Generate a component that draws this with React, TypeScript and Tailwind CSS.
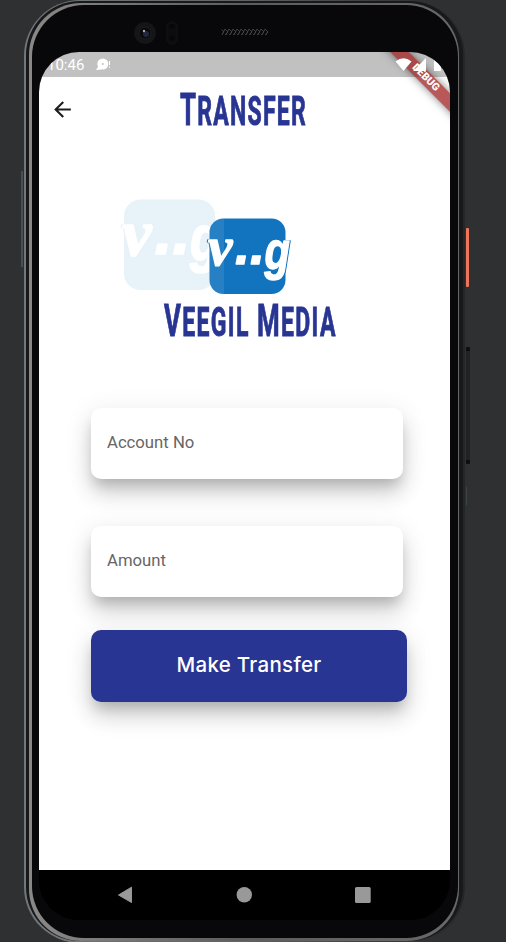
import React from "react";
import { MdArrowBack } from "react-icons/md";

const brandFont = "font-['Roboto',sans-serif]";

function Mark({ color, outline }: { color: string; outline: string }) {
  return (
    <>
      <rect width="76" height="75.5" rx="14" fill={color} />
      <g
        className={outline}
        fill="#fff"
        stroke="#fff"
        strokeWidth="1.4"
        strokeLinejoin="round"
        fontWeight="700"
        fontStyle="italic"
      >
        <text x="-1.500" y="46.500" fontSize="55" fontFamily="Liberation Serif, serif">v</text>
        <g fontFamily="Liberation Sans, sans-serif">
          <text x="25.500" y="45" fontSize="54">.</text>
          <text x="40.500" y="45" fontSize="54">.</text>
          <text transform="translate(55 50) scale(0.77 1)" fontSize="54">g</text>
        </g>
      </g>
    </>
  );
}

function Logo() {
  return (
    <svg width="180" height="104" viewBox="0 0 180 104" className="block overflow-visible">
      <g transform="translate(9 7.5) scale(1.2)">
        <Mark color="#e7f2f9" outline="[filter:drop-shadow(1px_0_0_#e7f2f9)_drop-shadow(-1px_0_0_#e7f2f9)]" />
      </g>
      <g transform="translate(94.5 26.5)">
        <Mark color="#1274bf" outline="[filter:drop-shadow(1px_0.5px_0_#1274bf)_drop-shadow(-0.7px_0_0_#1274bf)]" />
      </g>
      <path d="M94.500 40a14 14 0 0 1 14.500-13.500V102a14 14 0 0 1-14.500-14z" fill="#fff" opacity=".09" />
    </svg>
  );
}

function Field({ label }: { label: string }) {
  return (
    <div className="flex h-[71px] w-[312px] items-center rounded-[10px] bg-white px-4 pb-[1.500px] shadow-[0_9px_13px_-4px_rgba(0,0,0,0.19),0_16px_22px_0px_rgba(0,0,0,0.12),0_6px_26px_4px_rgba(0,0,0,0.07)]">
      <span className="font-['Roboto',sans-serif] text-[16.7px] text-[#666]">{label}</span>
    </div>
  );
}

function StatusBar() {
  return (
    <div className="flex h-[25px] items-center bg-[#c1c1c1] pl-[8px] text-white">
      <span className="w-[49px] pt-[2px] font-['Roboto',sans-serif] text-[15px] leading-[25px]">10:46</span>
      <svg width="16" height="14" viewBox="0 0 16 14">
        <circle cx="6.800" cy="6" r="5.500" fill="#fff" />
        <path d="M0 12l2.500-4 3 3.500z" fill="#fff" />
        <circle cx="6.800" cy="6" r="1" fill="#c1c1c1" />
        <path d="M13.500 3v4M13.500 8.500v1.200" stroke="#fff" />
      </svg>
    </div>
  );
}

function DebugRibbon() {
  return (
    <div className="absolute top-0 right-0 h-[90px] w-[90px] overflow-hidden">
      <div className="absolute top-[19px] left-[9px] flex h-[13px] w-[112px] rotate-45 items-center justify-center bg-[#a02020]/75 pl-px font-['Roboto',sans-serif] text-[10.500px] leading-none font-black text-white shadow-[0_0_9px_rgba(0,0,0,0.5)]">
        <span>DEBUG</span>
      </div>
      <svg className="absolute top-0 left-[14px]" width="76" height="25" viewBox="0 0 76 25">
        <path d="M21.500 9.500Q29.500 3 37.500 9.500L29.500 19z" fill="#fff" />
        <path d="M52 6v13H39z" fill="#fff" />
        <path d="M60 8h2V6h4v2h1v11h-7z" fill="#fff" />
      </svg>
    </div>
  );
}

function NavBar() {
  return (
    <div className="h-[50px] bg-black">
      <svg width="411" height="50" viewBox="0 0 411 50">
        <path d="M79.500 25L92.500 17.200V32.500z" fill="#999" stroke="#999" strokeWidth="1" strokeLinejoin="round" />
        <circle cx="205.300" cy="24.800" r="7.700" fill="#999" />
        <rect x="316" y="17" width="15.700" height="16" rx="1.500" fill="#999" />
      </svg>
    </div>
  );
}

function Bezel() {
  return (
    <div className="flex h-[47px] items-start pl-[94px]">
      <svg width="170" height="47" viewBox="0 0 170 47">
        <defs>
          <pattern id="mesh" width="4" height="6" patternUnits="userSpaceOnUse">
            <path d="M0 0l3 3-3 3M4 0L1 6" stroke="#454545" strokeWidth=".9" fill="none" />
          </pattern>
        </defs>
        <circle cx="12" cy="28" r="11" fill="#151517" />
        <circle cx="12" cy="28" r="6" fill="#090a0c" stroke="#1d1e22" />
        <circle cx="13" cy="29" r="3" fill="#24283d" />
        <circle cx="11" cy="26" r="1.200" fill="#aaa" />
        <rect x="34" y="17" width="10" height="22" rx="5" fill="#0c0c0e" stroke="#131315" />
        <circle cx="39" cy="21.500" r="3.500" fill="#070708" stroke="#0f0f11" />
        <circle cx="39" cy="33" r="3.500" fill="#070708" stroke="#0f0f11" />
        <rect x="88" y="24" width="47" height="6" rx="2" fill="url(#mesh)" />
      </svg>
    </div>
  );
}

function SideButtons() {
  return (
    <>
      <div className="absolute top-[171px] left-[21px] h-[96px] w-[1.500px] bg-[#4c4f51]" />
      <div className="absolute top-[228px] left-[466px] h-[59px] w-[3px] rounded-[1px] bg-[#f0745a]" />
      <div className="absolute top-[347px] left-[466px] h-[117px] w-[4px] rounded-[1px] border-y-4 border-[#0d0e0f] bg-[#202223]" />
      <div className="absolute top-[487px] left-[466px] h-[18px] w-px bg-[#3b4542]" />
    </>
  );
}

export default function App() {
  return (
    <div className="relative h-[942px] w-[506px] overflow-hidden bg-[#2e3032] pl-[24px]">
      <SideButtons />
      <div className="h-[943px] w-[441px] rounded-[56px] bg-linear-to-r from-[#73777a] via-[#606364] to-[#242628] pt-px pr-[2px] pb-[2px] pl-[2px]">
        <div className="h-full rounded-[54px] bg-[#17191a] pt-[2px] pr-[4px] pl-[3px]">
          <div className="h-full rounded-[52px] bg-linear-to-r from-[#8b8988] via-[#5c5e5c] to-[#686868] pt-[2px] pr-[1.500px] pb-[3px] pl-[3px]">
            <div className="h-full rounded-[52px] bg-[#08080a] pl-[7px]">
              <Bezel />
              <div className="relative w-[411px] overflow-hidden rounded-[40px] bg-black">
                <StatusBar />
                <main className="h-[793px] bg-white">
                  <header className="flex h-[64px] items-center pl-[10px]">
                    <button className="flex h-[26px] w-[26px] items-center justify-center" aria-label="Back">
                      <MdArrowBack size={25} color="#1d1d1d" />
                    </button>
                    <h1 className={`${brandFont} ml-[43px] flex h-[64px] w-[250px] items-center justify-center whitespace-nowrap text-[#283593]`}>
                      <span className="block scale-x-[0.575] text-[40px] leading-none font-bold tracking-[2.2px] [-webkit-text-stroke:0.9px_#283593]">
                        <span className="text-[45px]">T</span>RANSFER
                      </span>
                    </h1>
                  </header>
                  <div className="mt-[51px] ml-[76px]">
                    <Logo />
                  </div>
                  <div className={`${brandFont} ml-[61px] flex h-[50px] w-[300px] items-center justify-center pb-[2px] whitespace-nowrap text-[#283593]`}>
                    <span className="block scale-x-[0.575] text-[40px] leading-none font-bold tracking-[2.4px] [-webkit-text-stroke:0.9px_#283593]">
                      <span className="text-[45px]">V</span>EEGIL <span className="text-[45px]">M</span>EDIA
                    </span>
                  </div>
                  <form className="ml-[52px] flex flex-col pt-[62px]" onSubmit={(e) => e.preventDefault()}>
                    <Field label="Account No" />
                    <div className="h-[47px]" />
                    <Field label="Amount" />
                    <button className="mt-[33px] flex h-[72px] w-[316px] items-center justify-center rounded-[10px] bg-[#283593] pb-[2px] font-['Inter',sans-serif] text-[20.500px] font-medium tracking-[0.3px] text-white shadow-[0_9px_13px_-4px_rgba(0,0,0,0.19),0_16px_22px_0px_rgba(0,0,0,0.12),0_6px_26px_4px_rgba(0,0,0,0.07)]">
                      Make Transfer
                    </button>
                  </form>
                </main>
                <NavBar />
                <DebugRibbon />
              </div>
            </div>
          </div>
        </div>
      </div>
    </div>
  );
}
